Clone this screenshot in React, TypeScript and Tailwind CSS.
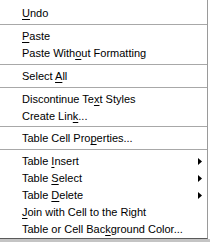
import React from "react";

type Item = { pre: string; key: string; post: string; sub?: boolean } | "sep";

const items: Item[] = [
  { pre: "", key: "U", post: "ndo" },
  "sep",
  { pre: "", key: "P", post: "aste" },
  { pre: "Paste With", key: "o", post: "ut Formatting" },
  "sep",
  { pre: "Select ", key: "A", post: "ll" },
  "sep",
  { pre: "Discontinue Te", key: "x", post: "t Styles" },
  { pre: "Create Lin", key: "k", post: "..." },
  "sep",
  { pre: "Table Cell Pro", key: "p", post: "erties..." },
  "sep",
  { pre: "Table ", key: "I", post: "nsert", sub: true },
  { pre: "Table ", key: "S", post: "elect", sub: true },
  { pre: "Table ", key: "D", post: "elete", sub: true },
  { pre: "", key: "J", post: "oin with Cell to the Right" },
  { pre: "Table or Cell Bac", key: "k", post: "ground Color..." },
];

const Arrow = () => (
  <svg width="4" height="7" viewBox="0 0 4 7" className="mr-[5px]">
    <path d="M0 0 L4 3.5 L0 7 Z" fill="#000" />
  </svg>
);

export default function App() {
  return (
    <div className="w-[210px] h-[242px] bg-white overflow-hidden font-['Liberation_Sans',Arial,sans-serif] text-[11px] text-black">
      <div className="flex flex-col w-[208px] h-[239px] border-r border-b border-r-[#9a9a9a] border-b-[#5a5a5a] pt-[5px]">
        {items.map((it, i) =>
          it === "sep" ? (
            <div key={i} className="h-[6px] pt-[2px]">
              <div className="h-px bg-[#a8a8a8]" />
            </div>
          ) : (
            <div key={i} className="h-[17px] flex items-center pl-[22px] leading-none">
              <span className="flex-1 whitespace-nowrap">
                {it.pre}
                <span className="underline underline-offset-[2px]">{it.key}</span>
                {it.post}
              </span>
              {it.sub && <Arrow />}
            </div>
          )
        )}
      </div>
      <div className="h-[3px] bg-[#c4c4c4]" />
    </div>
  );
}
